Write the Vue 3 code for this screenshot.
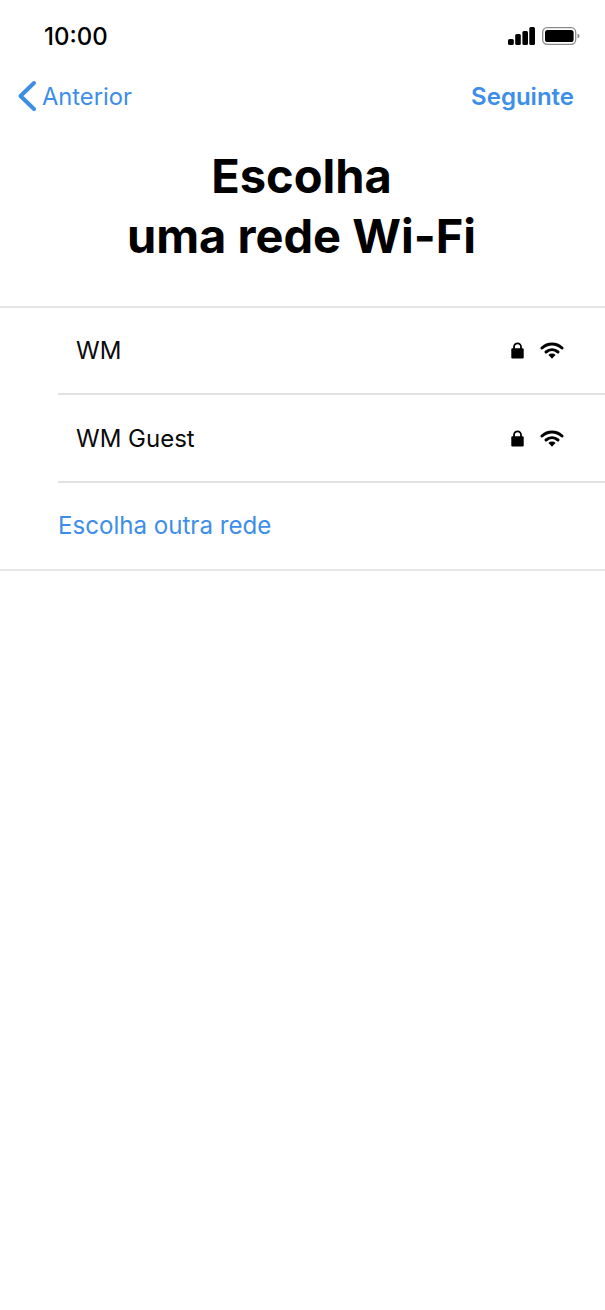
<template>
  <div class="screen">
    <div class="status-bar">
      <span class="time">10:00</span>
      <div class="status-icons">
        <svg width="27" height="18" viewBox="0 0 27 18">
          <rect x="0" y="12" width="5.8" height="6" rx="1.5" />
          <rect x="7.2" y="7" width="5.6" height="11" rx="1.5" />
          <rect x="14.4" y="4" width="5.6" height="14" rx="1.5" />
          <rect x="21.3" y="0" width="5.7" height="18" rx="1.5" />
        </svg>
        <svg width="38" height="18" viewBox="0 0 38 18">
          <rect x="0.7" y="0.7" width="33" height="16.6" rx="4.5" fill="none" stroke="#8a8a8a" stroke-width="1.3" />
          <rect x="3" y="3" width="28.6" height="12" rx="2.6" />
          <path d="M35.5 6.5c1.2.4 2 1.3 2 2.5s-.8 2.1-2 2.5z" fill="#8a8a8a" />
        </svg>
      </div>
    </div>

    <div class="nav-bar">
      <div class="back">
        <svg width="20" height="32" viewBox="0 0 20 32">
          <path d="M17 3 L3.5 16 L17 29" fill="none" stroke="#3d8ee8" stroke-width="4" stroke-linecap="round" stroke-linejoin="round" />
        </svg>
        <span>Anterior</span>
      </div>
      <span class="next">Seguinte</span>
    </div>

    <h1 class="title">Escolha<br />uma rede Wi-Fi</h1>

    <div class="network-list">
      <div v-for="net in networks" :key="net" class="network-row">
        <div class="network-inner">
          <span class="network-name">{{ net }}</span>
          <div class="network-icons">
            <svg width="13" height="17" viewBox="0 0 13 17">
              <path d="M3 7V4.8a3.5 3.5 0 0 1 7 0V7" fill="none" stroke="#000" stroke-width="1.8" />
              <rect x="0.3" y="6.3" width="12.4" height="10.2" rx="1.2" />
            </svg>
            <svg width="24" height="17" viewBox="0 0 24 17">
              <path d="M2 6 C7.7 0.8 16.3 0.8 22 6" fill="none" stroke="#000" stroke-width="3" stroke-linecap="round" />
              <path d="M6 10 C9.6 7 14.4 7 18 10" fill="none" stroke="#000" stroke-width="3" stroke-linecap="round" />
              <path d="M8.4 12.8 L12 16.8 L15.6 12.8 C13.5 11 10.5 11 8.4 12.8z" />
            </svg>
          </div>
        </div>
      </div>
      <div class="other-row">Escolha outra rede</div>
    </div>
  </div>
</template>

<script setup>
const networks = ['WM', 'WM Guest']
</script>

<style>
html,
body {
  margin: 0;
  background: #fff;
}
</style>

<style scoped>
.screen {
  width: 605px;
  height: 1310px;
  overflow: hidden;
  background: #fff;
  font-family: Inter, "Liberation Sans", sans-serif;
  color: #000;
}

.status-bar {
  height: 72px;
  box-sizing: border-box;
  padding: 0 25px 0 44px;
  display: flex;
  align-items: center;
  justify-content: space-between;
}

.time {
  font-size: 24px;
  font-weight: 500;
}

.status-icons {
  display: flex;
  align-items: center;
  gap: 7px;
}

.nav-bar {
  height: 48px;
  box-sizing: border-box;
  padding: 0 31px 0 16.5px;
  display: flex;
  align-items: center;
  justify-content: space-between;
  color: #3d8ee8;
  font-size: 24px;
}

.back {
  display: flex;
  align-items: center;
  gap: 5.5px;
  font-size: 23.7px;
}

.next {
  font-weight: 600;
}

.title {
  margin: 26px 2px 0 0;
  text-align: center;
  font-size: 47px;
  line-height: 60px;
  font-weight: 700;
}

.network-list {
  margin-top: 40px;
  border-top: 2px solid #e6e6e8;
  border-bottom: 2px solid #e6e6e8;
}

.network-row {
  padding-left: 58px;
}

.network-inner {
  height: 85.4px;
  padding: 0 41px 0 18px;
  display: flex;
  align-items: center;
  justify-content: space-between;
  border-bottom: 2px solid #e2e2e4;
}

.network-name {
  font-size: 24px;
  color: #0a0a0a;
}

.network-icons {
  display: flex;
  align-items: center;
  gap: 16px;
}

.other-row {
  height: 86px;
  padding-left: 58px;
  display: flex;
  align-items: center;
  font-size: 24.1px;
  color: #3d8ee8;
}
</style>
